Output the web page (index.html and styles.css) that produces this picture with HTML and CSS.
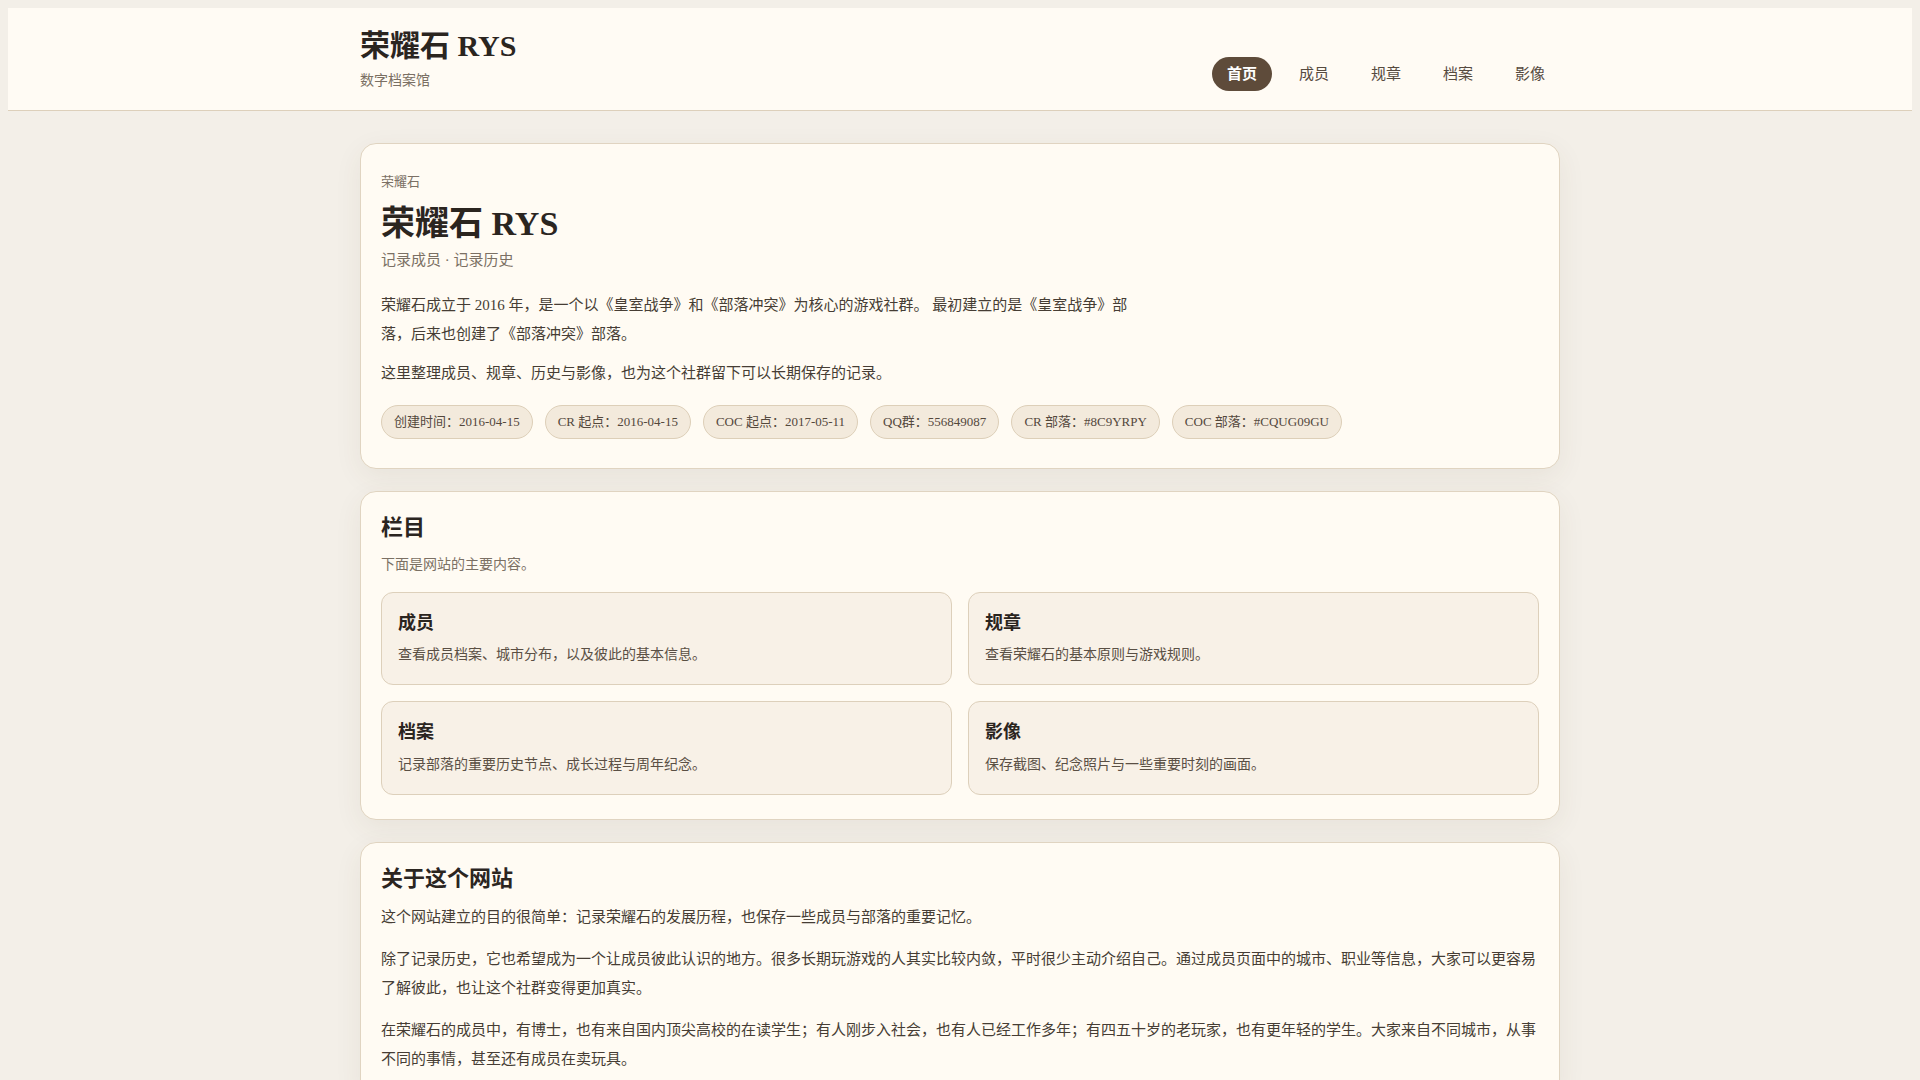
FILE: index.html
```html
<!DOCTYPE html>
<html lang="zh-CN">
<head>
<meta charset="utf-8">
<title>荣耀石 RYS · 数字档案馆</title>
<link rel="stylesheet" href="styles.css">
</head>
<body>
<header class="site-header">
  <div class="header-inner">
    <div class="brand">
      <div class="brand-title">荣耀石 RYS</div>
      <div class="brand-sub">数字档案馆</div>
    </div>
    <nav class="nav">
      <a class="nav-link active" href="#">首页</a>
      <a class="nav-link" href="#">成员</a>
      <a class="nav-link" href="#">规章</a>
      <a class="nav-link" href="#">档案</a>
      <a class="nav-link" href="#">影像</a>
    </nav>
  </div>
</header>

<main class="main">
  <section class="card hero">
    <p class="eyebrow">荣耀石</p>
    <h1 class="hero-title">荣耀石 RYS</h1>
    <p class="tagline">记录成员 · 记录历史</p>
    <div class="lead">
      <p>荣耀石成立于 2016 年，是一个以《皇室战争》和《部落冲突》为核心的游戏社群。 最初建立的是《皇室战争》部落，后来也创建了《部落冲突》部落。</p>
      <p>这里整理成员、规章、历史与影像，也为这个社群留下可以长期保存的记录。</p>
    </div>
    <div class="chips">
      <span class="chip">创建时间：2016-04-15</span>
      <span class="chip">CR 起点：2016-04-15</span>
      <span class="chip">COC 起点：2017-05-11</span>
      <span class="chip">QQ群：556849087</span>
      <span class="chip">CR 部落：#8C9YRPY</span>
      <span class="chip">COC 部落：#CQUG09GU</span>
    </div>
  </section>

  <section class="card sections">
    <h2 class="card-title">栏目</h2>
    <p class="section-sub">下面是网站的主要内容。</p>
    <div class="grid">
      <a class="tile" href="#">
        <h3 class="tile-title">成员</h3>
        <p class="tile-desc">查看成员档案、城市分布，以及彼此的基本信息。</p>
      </a>
      <a class="tile" href="#">
        <h3 class="tile-title">规章</h3>
        <p class="tile-desc">查看荣耀石的基本原则与游戏规则。</p>
      </a>
      <a class="tile" href="#">
        <h3 class="tile-title">档案</h3>
        <p class="tile-desc">记录部落的重要历史节点、成长过程与周年纪念。</p>
      </a>
      <a class="tile" href="#">
        <h3 class="tile-title">影像</h3>
        <p class="tile-desc">保存截图、纪念照片与一些重要时刻的画面。</p>
      </a>
    </div>
  </section>

  <section class="card about">
    <h2 class="card-title">关于这个网站</h2>
    <p>这个网站建立的目的很简单：记录荣耀石的发展历程，也保存一些成员与部落的重要记忆。</p>
    <p>除了记录历史，它也希望成为一个让成员彼此认识的地方。很多长期玩游戏的人其实比较内敛，平时很少主动介绍自己。通过成员页面中的城市、职业等信息，大家可以更容易了解彼此，也让这个社群变得更加真实。</p>
    <p>在荣耀石的成员中，有博士，也有来自国内顶尖高校的在读学生；有人刚步入社会，也有人已经工作多年；有四五十岁的老玩家，也有更年轻的学生。大家来自不同城市，从事不同的事情，甚至还有成员在卖玩具。</p>
  </section>
</main>
</body>
</html>
```
FILE: styles.css
```css
* {
  box-sizing: border-box;
}

html {
  background: #f3efe8;
}

body {
  margin: 8px;
  background: #f3efe8;
  color: #2f2922;
  font-family: "Liberation Serif", "Noto Sans CJK SC", serif;
}

/* Header */
.site-header {
  background: #fffbf4;
  border-bottom: 1px solid #ddd0bb;
}

.header-inner {
  max-width: 1200px;
  margin: 0 auto;
  padding: 20px 0 19px;
  display: flex;
  justify-content: space-between;
  align-items: flex-end;
}

.brand-title {
  font-size: 30px;
  line-height: 36px;
  font-weight: 700;
  color: #2b251f;
}

.brand-sub {
  margin-top: 6px;
  font-size: 14px;
  line-height: 21px;
  color: #7a6f63;
}

.nav {
  display: flex;
  gap: 12px;
}

.nav-link {
  display: block;
  padding: 6px 15px;
  font-size: 15px;
  line-height: 22px;
  color: #564a3f;
  text-decoration: none;
  border-radius: 999px;
}

.nav-link.active {
  background: #5e4b3a;
  color: #ffffff;
  font-weight: 700;
}

/* Main */
.main {
  max-width: 1200px;
  margin: 32px auto 0;
}

.card {
  background: #fffbf3;
  border: 1px solid #e0d4c1;
  border-radius: 16px;
  padding: 22px 20px 22px;
  margin-bottom: 22px;
  box-shadow: 0 8px 28px rgba(90, 70, 40, 0.07);
}

.hero {
  padding: 29px 20px 29px;
}

.sections {
  padding-bottom: 24px;
}

.eyebrow {
  margin: 0;
  font-size: 13px;
  line-height: 18px;
  color: #7b7064;
}

.hero-title {
  margin: 12px 0 0;
  font-size: 34px;
  line-height: 1.25;
  font-weight: 700;
  color: #2b251f;
}

.tagline {
  margin: 2px 0 0;
  font-size: 15px;
  line-height: 24px;
  color: #7b7064;
}

.lead {
  margin-top: 19px;
  max-width: 760px;
}

.lead p {
  margin: 0;
  font-size: 15px;
  line-height: 1.95;
  color: #463d34;
}

.lead p + p {
  margin-top: 10px;
}

.chips {
  margin-top: 17px;
  display: flex;
  flex-wrap: wrap;
  gap: 12px;
}

.chip {
  display: inline-block;
  padding: 6px 12px;
  font-size: 13px;
  line-height: 20px;
  color: #54483c;
  background: #f3eadc;
  border: 1px solid #ddcfb8;
  border-radius: 999px;
}

/* Sections */
.card-title {
  margin: 0;
  font-size: 22px;
  line-height: 1.3;
  font-weight: 700;
  color: #2b251f;
}

.section-sub {
  margin: 11px 0 0;
  font-size: 14px;
  line-height: 22px;
  color: #7b7064;
}

.grid {
  margin-top: 16px;
  display: grid;
  grid-template-columns: 1fr 1fr;
  gap: 16px;
}

.tile {
  display: block;
  padding: 18px 16px 17px;
  background: #f8f1e7;
  border: 1px solid #ddd0bb;
  border-radius: 12px;
  text-decoration: none;
  color: inherit;
}

.tile-title {
  margin: 0 0 7px;
  font-size: 18px;
  line-height: 1.35;
  font-weight: 700;
  color: #2b251f;
}

.tile-desc {
  margin: 0;
  font-size: 14px;
  line-height: 1.8;
  color: #5a4f44;
}

/* About */
.about .card-title {
  margin-bottom: 10px;
}

.about p {
  margin: 0;
  font-size: 15px;
  line-height: 1.96;
  color: #463d34;
}

.about p + p {
  margin-top: 12px;
}
```
